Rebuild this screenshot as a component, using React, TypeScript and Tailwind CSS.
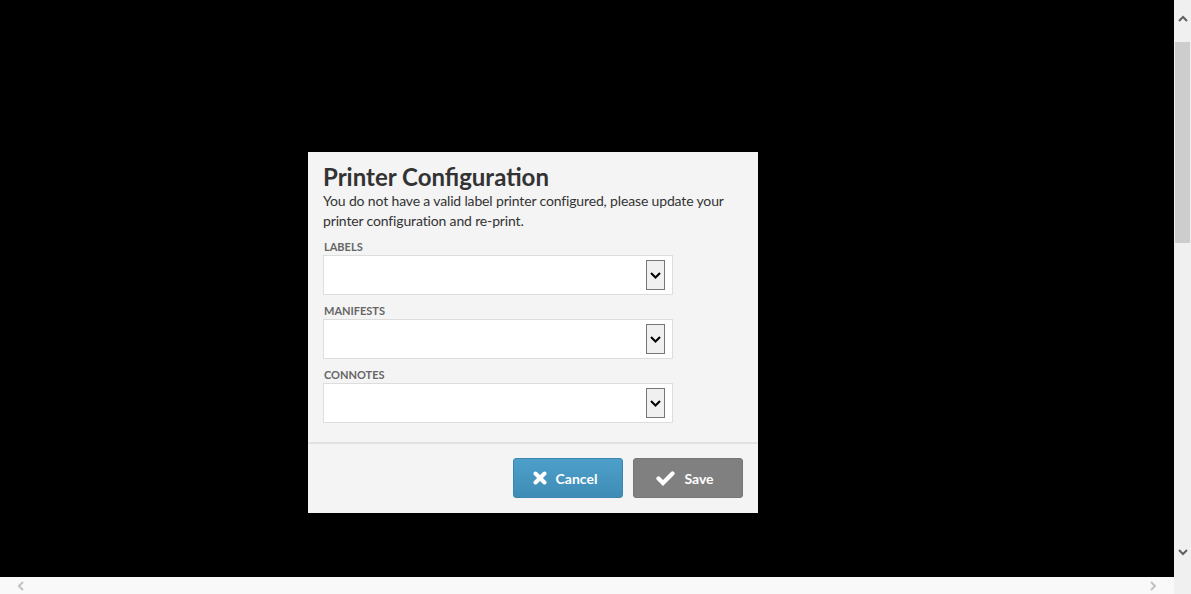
const FIELDS = ['Labels', 'Manifests', 'Connotes'];

function SelectBox() {
  return (
    <div className="w-[350px] h-[40px] bg-white border border-[#dddddd] flex items-center justify-end pr-[7px]">
      <div className="w-[19px] h-[30px] bg-[#f0f0f0] border border-[#767676] flex items-center justify-center">
        <svg width="11" height="7" viewBox="0 0 11 7">
          <polyline points="1,1 5.5,5.5 10,1" fill="none" stroke="#000" strokeWidth="2" />
        </svg>
      </div>
    </div>
  );
}

function Chevron({ dir, color }: { dir: 'up' | 'down' | 'left' | 'right'; color: string }) {
  const pts = {
    up: '1,7 5,3 9,7',
    down: '1,3 5,7 9,3',
    left: '7,1 3,5 7,9',
    right: '3,1 7,5 3,9',
  }[dir];
  return (
    <svg width="10" height="10" viewBox="0 0 10 10">
      <polyline points={pts} fill="none" stroke={color} strokeWidth="2" />
    </svg>
  );
}

function TimesIcon() {
  return (
    <svg width="14" height="14" viewBox="0 0 14 14">
      <path d="M2.5 2.5 L11.5 11.5 M11.5 2.5 L2.5 11.5" stroke="#fff" strokeWidth="4" strokeLinecap="round" fill="none" />
    </svg>
  );
}

function CheckIcon() {
  return (
    <svg width="19" height="15" viewBox="0 0 19 15">
      <polyline points="2.5,7.5 7,12 16.5,2.5" stroke="#fff" strokeWidth="4.2" strokeLinecap="round" strokeLinejoin="miter" fill="none" />
    </svg>
  );
}

export default function App() {
  return (
    <div className="w-[1191px] h-[594px] flex overflow-hidden font-['Lato','Open_Sans',sans-serif]">
      <div className="w-[1174px] flex flex-col">
        {/* Backdrop */}
        <div className="h-[577px] bg-black pl-[308px] pt-[152px]">
          <div className="w-[450px] bg-[#f4f4f4] text-[#333333]">
            <div className="px-[15px] pt-[9px] pb-[19px]">
              <h2 className="text-[24px] font-bold leading-[32px]">Printer Configuration</h2>
              <p className="text-[14px] leading-[20px] -mt-[2px] tracking-[-0.15px]">
                You do not have a valid label printer configured, please update your printer configuration and re-print.
              </p>
              <div className="mt-[8px] flex flex-col gap-[8px]">
                {FIELDS.map(f => (
                  <div key={f}>
                    <div className="text-[11px] font-bold uppercase text-[#666666] leading-[16px] pl-[1px]">{f}</div>
                    <SelectBox />
                  </div>
                ))}
              </div>
            </div>
            <div className="border-t-2 border-[#e2e2e2] px-[15px] pt-[14px] pb-[15px] flex justify-end gap-[10px]">
              <button className="w-[110px] h-[40px] rounded-[3px] bg-gradient-to-b from-[#4d9fca] to-[#3e8cb6] border border-[#3b86b0] text-white text-[14px] font-bold flex items-center justify-center gap-[9px] pr-[6px]">
                <TimesIcon />
                Cancel
              </button>
              <button className="w-[110px] h-[40px] rounded-[3px] bg-[#808080] border border-[#777777] text-white text-[14px] font-bold flex items-center justify-center gap-[9px] pr-[6px]">
                <CheckIcon />
                Save
              </button>
            </div>
          </div>
        </div>
        {/* Horizontal scrollbar */}
        <div className="h-[17px] bg-[#f9f9f9] flex items-center justify-between px-[16px]">
          <Chevron dir="left" color="#c2c2c2" />
          <Chevron dir="right" color="#c2c2c2" />
        </div>
      </div>
      {/* Vertical scrollbar */}
      <div className="w-[17px] bg-[#f0f0f0] flex flex-col items-center">
        <div className="h-[38px] flex items-center justify-center">
          <Chevron dir="up" color="#606060" />
        </div>
        <div className="w-[15px] h-[201px] mt-[4px] bg-[#cdcdcd]" />
        <div className="flex-1" />
        <div className="h-[36px] flex items-start justify-center pt-[9px] mb-[20px]">
          <Chevron dir="down" color="#606060" />
        </div>
      </div>
    </div>
  );
}
